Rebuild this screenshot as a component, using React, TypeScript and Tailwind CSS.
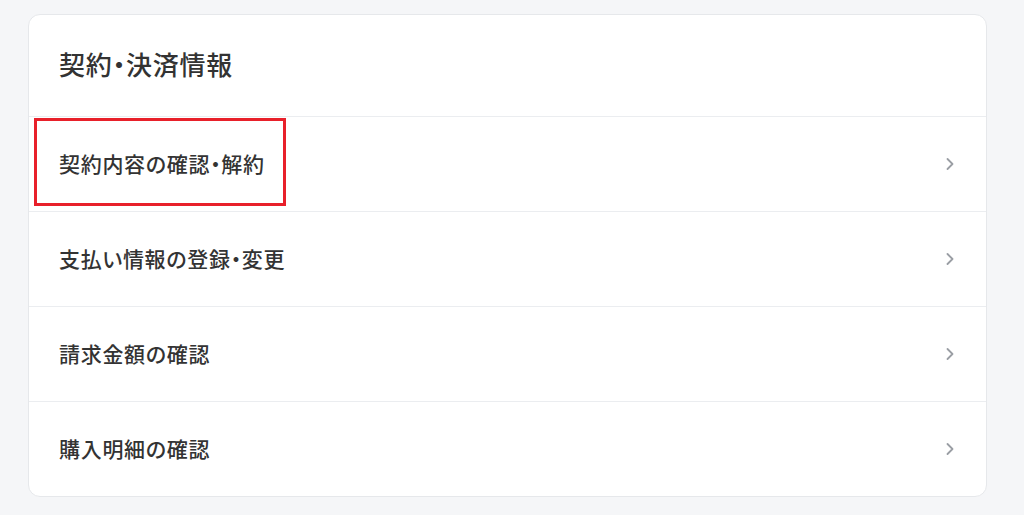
import { ChevronRight } from 'lucide-react';

const items = [
  '契約内容の確認・解約',
  '支払い情報の登録・変更',
  '請求金額の確認',
  '購入明細の確認',
];

export default function App() {
  return (
    <div
      className="min-h-[515px] w-full bg-[#f5f6f8] pt-[14px] pl-[28px] [font-feature-settings:'palt']"
      style={{ fontFamily: '"Noto Sans CJK JP", "Noto Sans", sans-serif' }}
    >
      <div className="relative w-[959px] rounded-xl border border-[#e6e8eb] bg-white">
        <div className="flex h-[101px] items-center pb-[4px] pl-[30px] pr-8">
          <h2 className="text-[26px] font-medium tracking-[0.7px] text-[#333]">契約・決済情報</h2>
        </div>

        {items.map((label, i) => (
          <div
            key={i}
            className="flex h-[95px] items-center justify-between border-t border-[#ebedf0] pl-[30px] pr-[26px]"
          >
            <span className="text-[21px] font-medium tracking-[0.7px] text-[#333]">{label}</span>
            <ChevronRight className="h-5 w-5 text-[#9a9ea4]" strokeWidth={2.2} />
          </div>
        ))}

        {/* annotation box */}
        <div className="pointer-events-none absolute left-[5px] top-[103px] h-[88px] w-[252px] border-[3px] border-[#e8202a]" />
      </div>
    </div>
  );
}
